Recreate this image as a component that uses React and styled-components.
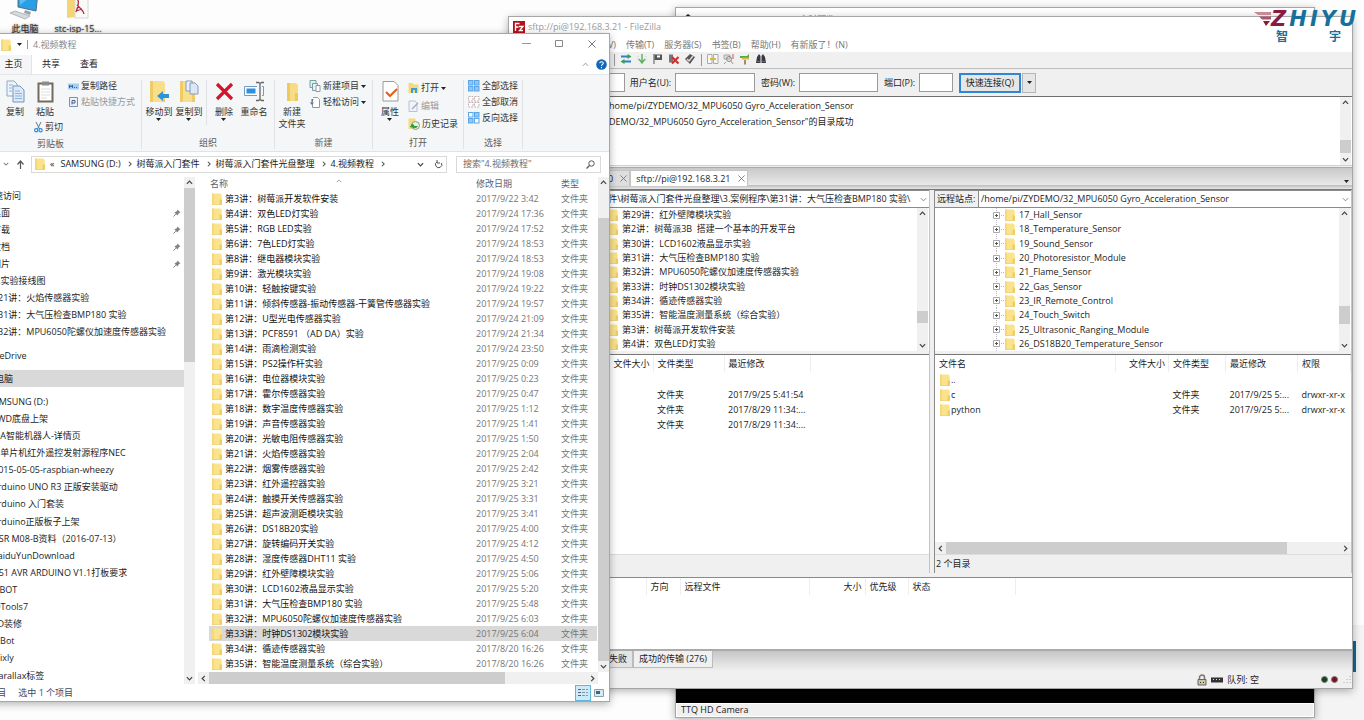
import React from 'react';
import styled, { createGlobalStyle } from 'styled-components';


const GlobalStyle = createGlobalStyle`
    * {
        box-sizing: border-box;
    }

    html, body, #root {
        height: 100%;
        margin: 0;
    }

    body, button, input, select, table {
        font-family: "Open Sans", "Noto Sans CJK SC", sans-serif;
        font-size: 9px;
        line-height: 12px;
        color: #1c1c1c;
    }

    button {
        border: 0;
        padding: 0;
        background: none;
    }

    ul {
        list-style: none;
        margin: 0;
        padding: 0;
    }
`

const Desktop = styled.div`
    position: relative;
    height: 100%;
    min-height: 600px;
    overflow: hidden;
    background: #fdfdfd;
    white-space: nowrap;
`

const DesktopIcon = styled.div`
    position: absolute;
    top: -8px;
    left: ${({ $left }) => $left}px;
    width: 52px;
    display: flex;
    flex-direction: column;
    align-items: center;
    gap: 3px;
    color: #333;
    text-shadow: 0 0 2px #555;
`

const Window = styled.section`
    position: absolute;
    display: flex;
    flex-direction: column;
    border: 1px solid #a6a6a6;
    background: #fff;
    box-shadow: 0 2px 8px rgba(0, 0, 0, .3);
`

/* ---------- camera window ---------- */

const CameraWindow = styled(Window)`
    top: 7px;
    right: 49px;
    bottom: 2px;
    left: 675px;
`

const CameraTitle = styled.div`
    display: flex;
    align-items: center;
    gap: 5px;
    height: 20px;
    padding: 3px 6px 0;
    color: #777;
`

const CameraView = styled.div`
    flex: 1;
    background: #000;
`

const CameraStatus = styled.div`
    height: 14px;
    padding: 0 4px;
    background: #f0f0f0;
    border: 1px solid #fff;
`

const SidePanel = styled.div`
    position: absolute;
    right: 0;
    bottom: 0;
    width: 49px;
    height: 95px;
    padding: 16px 8px 48px 0;
    background: #f4f4f4;
`

const SideAccent = styled.div`
    height: 100%;
    background: #0d6a94;
`

/* ---------- shared pieces ---------- */

const Spacer = styled.div`
    flex: ${({ $size }) => $size ? `0 0 ${$size}px` : '1'};
`

const Bar = styled.div`
    flex: none;
    display: flex;
    flex-direction: ${({ $horizontal }) => $horizontal ? 'row' : 'column'};
    align-items: center;
    ${({ $horizontal }) => $horizontal ? 'height: 12px;' : 'width: 11px;'}
    background: #f0f0f0;
`

const BarTrack = styled.div`
    flex: 1;
    align-self: stretch;
    display: flex;
    flex-direction: ${({ $horizontal }) => $horizontal ? 'row' : 'column'};
`

const BarGap = styled.div`
    flex: ${({ $part }) => $part};
`

const BarThumb = styled.div`
    flex: ${({ $part }) => $part};
    background: #cdcdcd;
`

const BarButton = styled.button`
    width: 11px;
    height: 11px;
    display: flex;
    align-items: center;
    justify-content: center;
`

const Chevron = ({ dir = 'down', size = 7, color = '#444', width = 1.4 }) => {
    const paths = {
        down: 'M1 2.5 4 5.5 7 2.5',
        up: 'M1 5.5 4 2.5 7 5.5',
        left: 'M5.5 1 2.5 4 5.5 7',
        right: 'M2.5 1 5.5 4 2.5 7'
    };
    return (
        <svg width={size} height={size} viewBox="0 0 8 8" fill="none" stroke={color} strokeWidth={width}>
            <path d={paths[dir]} />
        </svg>
    )
}

const Caret = () => (
    <svg width="5" height="3" viewBox="0 0 5 3"><path d="M0 0h5L2.5 3z" fill="#222" /></svg>
)

const ScrollBar = ({ parts, horizontal }) => (
    <Bar $horizontal={horizontal}>
        <BarButton aria-label="back"><Chevron dir={horizontal ? 'left' : 'up'} /></BarButton>
        <BarTrack $horizontal={horizontal}>
            <BarGap $part={parts[0]} />
            <BarThumb $part={parts[1]} />
            <BarGap $part={parts[2]} />
        </BarTrack>
        <BarButton aria-label="forward"><Chevron dir={horizontal ? 'right' : 'down'} /></BarButton>
    </Bar>
)

const Folder = ({ size = 12 }) => (
    <svg width={size} height={size} viewBox="0 0 12 12">
        <path d="M1 .5h8.5l1.2 1.5v9.5H1z" fill="#fbe38c" />
        <path d="M1 .5h2v11H1z" fill="#f6d878" />
        <path d="M8.6 6.5h2.4v5H8.6z" fill="#f1cd5c" />
        <path d="M1 11.5h10" stroke="#e5c25c" strokeWidth=".6" />
    </svg>
)

/* ---------- explorer window ---------- */

const ExplorerWindow = styled(Window)`
    top: 33px;
    bottom: 18px;
    left: -41px;
    width: 651px;
`

const ExplorerTitle = styled.div`
    flex: none;
    display: flex;
    align-items: center;
    gap: 5px;
    height: 21px;
    padding: 0 13px 0 40px;
    color: #8a8a8a;
`

const TitleDivider = styled.div`
    width: 1px;
    height: 9px;
    background: #999;
`

const WindowButtons = styled.div`
    margin-left: auto;
    display: flex;
    gap: 24px;
`

const TabRow = styled.div`
    flex: none;
    display: flex;
    align-items: stretch;
    height: 19px;
    padding-right: 2px;
`

const RibbonTab = styled.button`
    width: ${({ $width }) => $width}px;
    padding-bottom: 1px;
    background: ${({ $active }) => $active ? '#f5f6f7' : 'transparent'};
    padding-left: ${({ $active }) => $active ? 36 : 0}px;
    border-right: 1px solid ${({ $active }) => $active ? '#e3e4e6' : 'transparent'};
`

const TabTools = styled.div`
    margin-left: auto;
    display: flex;
    align-items: center;
    gap: 7px;
`

const Ribbon = styled.div`
    flex: none;
    display: flex;
    height: 78px;
    padding: 5px 0 2px;
    background: #f5f6f7;
    border-top: 1px solid #e4e6e8;
    border-bottom: 1px solid #e2e3e4;
`

const RibbonGroup = styled.div`
    width: ${({ $width }) => $width}px;
    display: flex;
    flex-direction: column;
    border-right: 1px solid #e0e2e4;
`

const GroupBody = styled.div`
    flex: 1;
    display: flex;
    align-items: flex-start;
    padding-left: ${({ $pad = 0 }) => $pad}px;
`

const GroupLabel = styled.div`
    text-align: center;
    color: #5c5c5c;
`

const BigButton = styled.button`
    width: 30px;
    display: flex;
    flex-direction: column;
    align-items: center;
    gap: 3px;
    color: #333;
`

const BigLabel = styled.span`
    display: flex;
    flex-direction: column;
    align-items: center;
    white-space: pre-line;
`

const SmallColumn = styled.div`
    display: flex;
    flex-direction: column;
    gap: ${({ $gap = 4 }) => $gap}px;
    padding-left: ${({ $pad = 0 }) => $pad}px;
    padding-top: ${({ $top = 0 }) => $top}px;
`

const SmallButton = styled.button`
    display: flex;
    align-items: center;
    gap: 2px;
    height: 12px;
    color: ${({ disabled }) => disabled ? '#9a9a9a' : '#333'};
`

const InnerDivider = styled.div`
    align-self: stretch;
    width: 1px;
    margin: 0 2px 12px;
    background: #e0e2e4;
`

const AddressRow = styled.div`
    flex: none;
    display: flex;
    align-items: center;
    height: 24px;
    padding: 0 8px 0 43px;
`

const NavArrows = styled.div`
    display: flex;
    align-items: center;
    gap: 7px;
    width: 28px;
`

const AddressBox = styled.div`
    flex: 424;
    height: 17px;
    display: flex;
    align-items: center;
    gap: 4px;
    padding: 0 3px 0 2px;
    border: 1px solid #d9d9d9;
`

const Crumb = styled.button`
    margin-right: 2px;
`

const SearchBox = styled.label`
    flex: 137;
    height: 17px;
    margin-left: 9px;
    padding: 0 5px 0 6px;
    display: flex;
    align-items: center;
    border: 1px solid #d9d9d9;
`

const SearchInput = styled.input`
    flex: 1;
    min-width: 0;
    border: 0;
    padding: 0;
    background: none;

    &::placeholder {
        color: #6d6d6d;
        opacity: 1;
    }
`

const ExplorerBody = styled.div`
    flex: 1;
    min-height: 0;
    display: flex;
    padding-top: 1px;
`

const NavPane = styled.div`
    flex: 0 0 224px;
    display: flex;
    flex-direction: column;
    padding-top: 10px;
`

const NavItem = styled.button`
    flex: 1;
    min-height: 0;
    display: flex;
    align-items: center;
    justify-content: space-between;
    padding-left: ${({ $left }) => $left}px;
    padding-right: 3px;
    background: ${({ $selected }) => $selected ? '#d9d9d9' : 'transparent'};
`

const FilePane = styled.div`
    flex: 1;
    min-width: 0;
    display: flex;
    flex-direction: column;
    padding-left: 3px;
`

const FileScroll = styled.div`
    flex: 1;
    min-height: 0;
    display: flex;
`

const FileArea = styled.div`
    flex: 1;
    min-width: 0;
    overflow: hidden;
    padding: 0 1px 0 11px;
`

const BottomScroll = styled.div`
    padding-right: 11px;
`

const FileTable = styled.table`
    width: 100%;
    table-layout: fixed;
    border-collapse: collapse;

    th, td {
        height: 15px;
        padding: 0;
        font-weight: 400;
        text-align: left;
    }

    th {
        height: 14px;
        color: #55657a;
    }
`

const FileRow = styled.tr`
    background: ${({ $selected }) => $selected ? '#d9d9d9' : 'transparent'};
`

const FileName = styled.td`
    > div {
        display: flex;
        align-items: center;
        gap: 2px;
        padding-left: 2px;
        color: #111;
    }
`

const Muted = styled.td`
    color: #757575;
`

const NameHead = styled.div`
    display: flex;
    align-items: flex-start;
    gap: 108px;
    padding-left: 1px;
`

const ExplorerStatus = styled.div`
    flex: none;
    height: 17px;
    display: flex;
    align-items: center;
    gap: 12px;
    padding: 0 2px 0 18px;
    color: #3a4a66;
`

const ViewButtons = styled.div`
    margin-left: auto;
    display: flex;
    align-items: center;
`

const ViewButton = styled.button`
    width: 16px;
    height: 16px;
    display: flex;
    align-items: center;
    justify-content: center;
    border: 1px solid ${({ $active }) => $active ? '#5fb8dc' : 'transparent'};
    background: ${({ $active }) => $active ? '#cdeaf6' : 'transparent'};
`

/* ---------- ftp window ---------- */

const FtpWindow = styled(Window)`
    top: 16px;
    right: 11px;
    bottom: 31px;
    left: 508px;
    background: #f0f0f0;
`

const FtpTitle = styled.div`
    flex: none;
    display: flex;
    align-items: center;
    gap: 3px;
    height: 20px;
    padding-left: 4px;
    background: #fff;
    color: #999;
`

const FtpMenu = styled.nav`
    flex: none;
    display: flex;
    align-items: center;
    gap: 10px;
    height: 15px;
    padding-left: 2px;
    background: #fff;

    button {
        color: #777;
    }
`

const Toolbar = styled.div`
    flex: none;
    display: flex;
    align-items: center;
    gap: 4px;
    height: 17px;
    padding-left: 104px;
    border-bottom: 1px solid #bdbdbd;
`

const ToolDivider = styled.div`
    width: 1px;
    height: 12px;
    margin: 0 1px;
    background: #999;
`

const QuickConnect = styled.form`
    flex: none;
    display: flex;
    align-items: center;
    height: 27px;
`

const FieldLabel = styled.label`
    width: ${({ $width }) => $width}px;
    padding-right: 4px;
    text-align: right;
`

const Field = styled.input`
    width: ${({ $width }) => $width}px;
    height: 19px;
    padding: 0 3px;
    border: 1px solid #9a9a9a;
    background: #fff;
`

const ConnectButton = styled.button`
    width: 62px;
    height: 20px;
    margin-left: 6px;
    border: 2px solid #2f86d2;
    background: #e6e6e6;
`

const ConnectMenu = styled.button`
    width: 14px;
    height: 20px;
    margin-left: 1px;
    display: flex;
    align-items: center;
    justify-content: center;
    border: 1px solid #b5b5b5;
    background: #e6e6e6;
`

const LogPanel = styled.div`
    flex: none;
    display: flex;
    height: 70px;
    padding-right: 1px;
    background: #fff;
    border-top: 1px solid #6f6f6f;
    border-bottom: 1px solid #d0d0d0;
`

const LogText = styled.div`
    flex: 1;
    padding-top: 1px;
`

const LogLine = styled.div`
    display: flex;
    height: 16px;
    align-items: center;
`

const LogPrefix = styled.span`
    width: 100px;
    display: flex;
    justify-content: flex-end;
    overflow: hidden;
`

const SiteTabs = styled.div`
    flex: none;
    display: flex;
    align-items: flex-end;
    height: 23px;
    margin-top: 1px;
    padding: 0 3px 3px 4px;
    border-top: 1px solid #aaa;
    border-bottom: 1px solid #777;
    background: linear-gradient(#c9c9cb, #e8e8e8 80%, #bbb 81%, #e8e8e8 100%);
`

const SiteTab = styled.button`
    height: 16px;
    display: flex;
    align-items: center;
    gap: 7px;
    padding: 0 2px 0 5px;
    background: ${({ $active }) => $active ? '#fff' : '#dedede'};
    border: 1px solid #c4c4c4;
    border-bottom: 0;
`

const Panes = styled.div`
    flex: 1;
    min-height: 0;
    display: flex;
    gap: 4px;
`

const Pane = styled.div`
    flex: ${({ $grow }) => $grow};
    min-width: 0;
    display: flex;
    flex-direction: column;
    border-left: 1px solid #8a8a8a;
    border-right: 1px solid #c4c4c4;
`

const PathRow = styled.div`
    flex: none;
    display: flex;
    align-items: center;
    height: 18px;
    border-top: 1px solid #8a8a8a;
    border-bottom: 1px solid #8a8a8a;
    background: #fff;
`

const PathLabel = styled.label`
    width: ${({ $width }) => $width}px;
    height: 16px;
    padding: 2px 0 0 2px;
    overflow: hidden;
    background: #f0f0f0;
    border-right: 1px solid #8a8a8a;
`

const PathBox = styled.div`
    flex: 1;
    min-width: 0;
    display: flex;
    align-items: center;
    padding-right: 2px;
`

const PathSelect = styled.select`
    flex: 1;
    min-width: 0;
    appearance: none;
    border: 0;
    padding: 0 0 0 2px;
    background: transparent;
`

const TreePanel = styled.div`
    flex: none;
    display: flex;
    height: 143px;
    padding-right: 1px;
    background: #fff;
`

const Tree = styled.ul`
    flex: 1;
    display: flex;
    flex-direction: column;
    padding-left: ${({ $left }) => $left}px;
`

const TreeItem = styled.li`
    flex: 1;
    min-height: 0;
    display: flex;
    align-items: center;
    gap: 3px;
    white-space: pre;
`

const ListPanel = styled.div`
    flex: 1;
    min-height: 0;
    margin-top: 3px;
    border-top: 1px solid #777;
    background: #fff;
    overflow: hidden;
`

const ListTable = styled.table`
    width: ${({ $width }) => $width || '100%'};
    table-layout: fixed;
    border-collapse: collapse;

    th, td {
        height: 15px;
        padding: 0 0 0 4px;
        font-weight: 400;
        text-align: left;
        overflow: hidden;
    }

    th {
        height: 17px;
        border-right: 1px solid #eee;
    }

    th.size {
        text-align: right;
        padding: 0 3px 0 0;
    }
`

const ListName = styled.div`
    display: flex;
    align-items: center;
`

const PaneStatus = styled.div`
    flex: none;
    height: 19px;
    padding: 3px 1px;
    border-top: 1px solid #ddd;
`

const QueuePanel = styled.div`
    flex: none;
    height: 74px;
    margin-top: 4px;
    background: #fff;
    border-top: 1px solid #8a8a8a;
    border-bottom: 2px solid #aaa;
`

const QueueTabs = styled.div`
    flex: none;
    display: flex;
    height: 20px;
    align-items: flex-start;
    padding-left: 44px;
    background: linear-gradient(#c6c6c8, #f0f0f0);
`

const QueueTab = styled.button`
    height: 17px;
    width: ${({ $width }) => $width}px;
    padding-right: 5px;
    text-align: right;
    background: ${({ $active }) => $active ? '#f0f0f0' : '#e4e4e4'};
    border: 1px solid #bbb;
    border-top: 0;
`

const FtpStatus = styled.div`
    flex: none;
    display: flex;
    align-items: center;
    justify-content: flex-end;
    height: 17px;
    gap: 4px;
    padding-right: 1px;
`

const Lights = styled.div`
    display: flex;
    gap: 3px;
    margin-left: 58px;
`

const Light = styled.span`
    width: 7px;
    height: 7px;
    border-radius: 50%;
    border: 1px solid #777;
    background: ${({ $color }) => $color};
`

/* ---------- logo ---------- */

const Logo = styled.div`
    position: absolute;
    top: 10px;
    right: 8px;
    color: #17709c;
`

const LogoWord = styled.div`
    display: flex;
    align-items: center;
    gap: 3px;
    font: italic 700 21px/18px "DejaVu Sans", sans-serif;
`

const LogoZ = styled.span`
    display: flex;
    align-items: center;
    color: #8b1a3c;
`

const LogoSub = styled.div`
    display: flex;
    gap: 41px;
    padding-left: 22px;
    font-size: 12px;
    line-height: 18px;
    font-weight: 700;
`


const quickAccess = [
    { title: '快速访问', left: 25 },
    { title: '桌面', left: 32, pin: true },
    { title: '下载', left: 32, pin: true },
    { title: '文档', left: 32, pin: true },
    { title: '图片', left: 32, pin: true },
    { title: '1.实验接线图', left: 33 },
    { title: '第21讲：火焰传感器实验', left: 29 },
    { title: '第31讲：大气压检查BMP180 实验', left: 29 },
    { title: '第32讲：MPU6050陀螺仪加速度传感器实验', left: 29 }
];

const drives = [
    { title: 'SAMSUNG (D:)', left: 28 },
    { title: '4WD底盘上架', left: 32 },
    { title: 'ADA智能机器人-详情页', left: 28 },
    { title: '51单片机红外遥控发射源程序NEC', left: 30 },
    { title: '2015-05-05-raspbian-wheezy', left: 33 },
    { title: 'Arduino UNO R3 正版安装驱动', left: 32 },
    { title: 'Arduino 入门套装', left: 32 },
    { title: 'Arduino正版板子上架', left: 32 },
    { title: 'ASR M08-B资料（2016-07-13）', left: 33 },
    { title: 'BaiduYunDownload', left: 32 },
    { title: 'C51 AVR ARDUINO V1.1打板要求', left: 33 },
    { title: 'DBOT', left: 33 },
    { title: 'DTools7', left: 34 },
    { title: 'KD装修', left: 32 },
    { title: 'MBot', left: 32 },
    { title: 'Mixly', left: 32 },
    { title: 'Parallax标签', left: 33 }
];

const files = [
    ['第3讲：树莓派开发软件安装', '2017/9/22 3:42'],
    ['第4讲：双色LED灯实验', '2017/9/24 17:36'],
    ['第5讲：RGB LED实验', '2017/9/24 17:52'],
    ['第6讲：7色LED灯实验', '2017/9/24 18:53'],
    ['第8讲：继电器模块实验', '2017/9/24 18:53'],
    ['第9讲：激光模块实验', '2017/9/24 19:08'],
    ['第10讲：轻触按键实验', '2017/9/24 19:22'],
    ['第11讲：倾斜传感器-振动传感器-干簧管传感器实验', '2017/9/24 19:57'],
    ['第12讲：U型光电传感器实验', '2017/9/24 21:09'],
    ['第13讲：PCF8591 （AD DA）实验', '2017/9/24 21:34'],
    ['第14讲：雨滴检测实验', '2017/9/24 23:50'],
    ['第15讲：PS2操作杆实验', '2017/9/25 0:09'],
    ['第16讲：电位器模块实验', '2017/9/25 0:23'],
    ['第17讲：霍尔传感器实验', '2017/9/25 0:47'],
    ['第18讲：数字温度传感器实验', '2017/9/25 1:12'],
    ['第19讲：声音传感器实验', '2017/9/25 1:41'],
    ['第20讲：光敏电阻传感器实验', '2017/9/25 1:50'],
    ['第21讲：火焰传感器实验', '2017/9/25 2:04'],
    ['第22讲：烟雾传感器实验', '2017/9/25 2:42'],
    ['第23讲：红外遥控器实验', '2017/9/25 3:21'],
    ['第24讲：触摸开关传感器实验', '2017/9/25 3:31'],
    ['第25讲：超声波测距模块实验', '2017/9/25 3:41'],
    ['第26讲：DS18B20实验', '2017/9/25 4:00'],
    ['第27讲：旋转编码开关实验', '2017/9/25 4:12'],
    ['第28讲：湿度传感器DHT11 实验', '2017/9/25 4:50'],
    ['第29讲：红外壁障模块实验', '2017/9/25 5:06'],
    ['第30讲：LCD1602液晶显示实验', '2017/9/25 5:20'],
    ['第31讲：大气压检查BMP180 实验', '2017/9/25 5:48'],
    ['第32讲：MPU6050陀螺仪加速度传感器实验', '2017/9/25 6:03'],
    ['第33讲：时钟DS1302模块实验', '2017/9/25 6:04'],
    ['第34讲：循迹传感器实验', '2017/8/20 16:26'],
    ['第35讲：智能温度测量系统（综合实验）', '2017/8/20 16:26']
];

const localTree = [
    '第29讲：红外壁障模块实验',
    '第2讲：树莓派3B  搭建一个基本的开发平台',
    '第30讲：LCD1602液晶显示实验',
    '第31讲：大气压检查BMP180 实验',
    '第32讲：MPU6050陀螺仪加速度传感器实验',
    '第33讲：时钟DS1302模块实验',
    '第34讲：循迹传感器实验',
    '第35讲：智能温度测量系统（综合实验）',
    '第3讲：树莓派开发软件安装',
    '第4讲：双色LED灯实验'
];

const remoteTree = [
    '17_Hall_Sensor',
    '18_Temperature_Sensor',
    '19_Sound_Sensor',
    '20_Photoresistor_Module',
    '21_Flame_Sensor',
    '22_Gas_Sensor',
    '23_IR_Remote_Control',
    '24_Touch_Switch',
    '25_Ultrasonic_Ranging_Module',
    '26_DS18B20_Temperature_Sensor'
];


/* ---------- icons ---------- */

const Icon = ({ w = 12, h = w, box = `0 0 ${w} ${h}`, children }) => (
    <svg width={w} height={h} viewBox={box} fill="none">{children}</svg>
)

const MonitorIcon = () => (
    <Icon w={30} h={28}>
        <path d="M8 0h20l-2 19L8 15z" fill="#2b9fe6" stroke="#4a6f8c" />
        <path d="M9 0h18L10 13z" fill="#5cbcf2" />
        <path d="M15 18l6 2-1 3-6-2z" fill="#9aa4ab" />
        <path d="M0 21l5-2 15 5-5 3z" fill="#d5dadd" stroke="#9aa0a4" strokeWidth=".7" />
    </Icon>
)

const IspIcon = () => (
    <Icon w={24} h={28}>
        <path d="M1 2l8 1v22l-8 1z" fill="#f6d473" />
        <path d="M9 4h13v22H9z" fill="#fafafa" stroke="#d8d8d8" />
        <path d="M10 7c4 0 2 8 0 13M11 13l4 4c2 2 3 4 3 5M10 19l6-2" stroke="#b22a3a" strokeWidth="1.3" />
    </Icon>
)

const PagesIcon = () => (
    <Icon w={19} h={23}>
        <path d="M1 1h7l3 3v12H1z" fill="#eef5fc" stroke="#8fa9c4" />
        <path d="M7 6h7l4 4v12H7z" fill="#dce9f8" stroke="#7895b4" />
        <path d="M9 11h5M9 13.500h7M9 16h7M9 18.500h7M3 5h4M3 8h3M3 11h3" stroke="#8fb3dc" />
    </Icon>
)

const ClipboardIcon = () => (
    <Icon w={17} h={23}>
        <path d="M1.500 3.500h14v18h-14z" fill="#fff" stroke="#76695e" strokeWidth="2" />
        <path d="M5 1.500h7v4H5z" fill="#8c8c8c" />
        <path d="M4 9h9M4 12h9M4 15h9M4 18h6" stroke="#ddd" />
    </Icon>
)

const PinBigIcon = () => (
    <Icon w={18} h={23}><path d="M10 3l6 6-5 2-3 5-6-6 5-3zM5 14l-4 5" fill="#8fa9c4" stroke="#6c87a3" /></Icon>
)

const MoveIcon = ({ copy }) => (
    <Icon w={20} h={23}>
        <path d="M1 1h13l2 2v19H1z" fill="#f9df8c" />
        <path d="M1 1h3v21H1zM13 14h3v8h-3z" fill="#efcb66" />
        {copy
            ? <><path d="M7 1h6v10H7z" fill="#e8f0fa" stroke="#869cc0" /><path d="M11 3h5l3 3v8h-8z" fill="#dbe6f7" stroke="#869cc0" /></>
            : <path d="M8 16l6-5v3h6v4h-6v3z" fill="#2e93dd" />}
    </Icon>
)

const DeleteIcon = () => (
    <Icon w={19} h={23}>
        <path d="M2 4l15 15M17 4L2 19" stroke="#d4142a" strokeWidth="3.200" />
    </Icon>
)

const RenameIcon = () => (
    <Icon w={20} h={23}>
        <path d="M13 6.500H.5v9H13" fill="#fff" stroke="#6f9cc4" />
        <path d="M2.500 8.500h9v5h-9z" fill="#2e8fdd" />
        <path d="M12 2.500h2.500l1.500 1 1.500-1H20M16 3.500v16M12 20.500h2.500l1.500-1 1.500 1H20" stroke="#666" strokeWidth="1.300" />
        <path d="M18 6.500h1.500v9H18" stroke="#6f9cc4" />
    </Icon>
)

const NewFolderIcon = () => (
    <Icon w={16} h={23}>
        <path d="M3 3h9l2 2v16H3z" fill="#f7dc83" />
        <path d="M3 3h3v18H3zM11 13h3v8h-3z" fill="#edc95f" />
    </Icon>
)

const PropertiesIcon = () => (
    <Icon w={17} h={23}>
        <path d="M1 1.500h11l4 4V21H1z" fill="#fff" stroke="#9a9a9a" />
        <path d="M4 12l4 4 7-7" stroke="#e0641e" strokeWidth="2.200" />
    </Icon>
)

const PathIcon = () => (
    <Icon w={11} h={12}>
        <path d="M0 3.500h11v6H0z" fill="#a9cdef" />
        <path d="M1.500 8V5l1.500 2 1.500-2v3M6 7.500h1M8 7.500h1" stroke="#2a6cab" />
    </Icon>
)

const ShortcutIcon = () => (
    <Icon w={11} h={12}>
        <path d="M1.500 1.500h8v9h-8z" fill="#eef1f8" stroke="#7c8fb4" />
        <path d="M4 8.500V4.500h3v2.500H4" stroke="#4a5f92" />
    </Icon>
)

const CutIcon = () => (
    <Icon w={9} h={12}>
        <path d="M2 1l3.500 7M7 1L3.500 8" stroke="#5e7a92" />
        <circle cx="2.200" cy="9.300" r="1.600" stroke="#2e8fdd" strokeWidth="1.200" />
        <circle cx="6.600" cy="9.300" r="1.600" stroke="#2e8fdd" strokeWidth="1.200" />
    </Icon>
)

const NewItemIcon = () => (
    <Icon w={12}>
        <path d="M1 .5h6v7H1z" fill="#dff0ee" stroke="#75a39f" />
        <path d="M3.500 3.500h5v7h-5z" fill="#e8f2f6" stroke="#7f9aa6" />
        <path d="M7 5.500h4v6H7z" fill="#fff" stroke="#8a9aa6" />
    </Icon>
)

const EasyAccessIcon = () => (
    <Icon w={12}>
        <path d="M4 1.500h4.500l2 2v8H3.500V8" fill="#fff" stroke="#8a9aa6" />
        <path d="M4.500 3H2.500v3.500H.8L3 9l2-2.500H3.500" fill="#5c7690" />
    </Icon>
)

const OpenIcon = () => (
    <Icon w={11} h={12}>
        <path d="M.5 1h4l1 1.500h5V11H.5z" fill="#f6da7a" />
        <path d="M3 11V6h6v5H7V8H5v3z" fill="#3b9fdc" />
    </Icon>
)

const EditIcon = () => (
    <Icon w={11} h={12}>
        <path d="M1 1h6l2 2v8.500H1z" fill="#f1f3f9" stroke="#b9c1d4" />
        <path d="M4 9l6-6" stroke="#9eabca" strokeWidth="1.500" />
    </Icon>
)

const HistoryIcon = () => (
    <Icon w={12}>
        <path d="M.5.5h7V11h-7z" fill="#f6da7a" />
        <circle cx="7.500" cy="7.500" r="4" fill="#e7f3e2" stroke="#8a9a88" />
        <path d="M9.500 8A3 3 0 014 8M2.500 9L4.500 6l2 2.500z" stroke="#2f9a38" fill="#2f9a38" />
    </Icon>
)

const SelectIcon = ({ kind }) => {
    const boxes = [[0.5, 0.5], [6.5, 0.5], [0.5, 6.5], [6.5, 6.5]];
    const filled = { all: [0, 1, 2, 3], none: [], invert: [1, 2] }[kind];
    const dim = kind === 'none';
    return (
        <Icon w={12}>
            {boxes.map(([x, y], i) => (
                <rect
                    key={i}
                    x={x}
                    y={y}
                    width="4.500"
                    height="4.500"
                    fill={filled.includes(i) ? '#8ec6f5' : '#fff'}
                    stroke={dim ? '#c3b3b3' : '#5aa5e6'}
                    strokeDasharray={dim ? '2 1' : undefined}
                />
            ))}
        </Icon>
    )
}

const PinIcon = () => (
    <Icon w={8}>
        <path d="M4.500.5l3 3-1.500.5L4.500 6.500l-3-3L4 2z" fill="#7d8288" />
        <path d="M2.800 5.200L.5 7.500" stroke="#7d8288" />
    </Icon>
)

const HelpIcon = () => (
    <Icon w={11}>
        <circle cx="5.500" cy="5.500" r="5.300" fill="#1266b8" />
        <path d="M3.800 4.200c0-2 3.500-2 3.500 0C7.300 5.500 5.500 5.300 5.500 7M5.500 8v1.200" stroke="#fff" strokeWidth="1.100" />
    </Icon>
)

const CloseIcon = ({ size = 8, color = '#777' }) => (
    <Icon w={size} box="0 0 8 8"><path d="M.5.5l7 7M7.500.5l-7 7" stroke={color} /></Icon>
)

const FzIcon = () => (
    <Icon w={12}>
        <path d="M0 0h12v12H0z" fill="#b5121b" />
        <path d="M2.500 10V2.500h4M2.500 6h3M6 5.500h4L6.500 9.500H10" stroke="#fff" strokeWidth="1.300" />
    </Icon>
)

const PlusBox = () => (
    <Icon w={12} h={15}>
        <path d="M4.500 0v15M7 7.500h5" stroke="#b9b9c6" strokeDasharray="1 1" />
        <path d="M1.500 4.500h6v6h-6z" fill="#fff" stroke="#a9a9b0" />
        <path d="M3 7.500h3M4.500 6v3" stroke="#555" />
    </Icon>
)

const CameraIcon = () => (
    <Icon w={11}><path d="M1 5l5-4 4 3-4 4zM2 6l2 4M8 6v4" stroke="#222" strokeWidth="1.500" /></Icon>
)

const toolIcons = [
    <><path d="M1 3.500h7M4 8.500h7" stroke="#2f7fd0" strokeWidth="2" /><path d="M7.500 1l4 2.500-4 2.500zM4.500 6l-4 2.500 4 2.500z" fill="#33a24a" /></>,
    <><path d="M6 1v8M3 6l3 4 3-4" stroke="#63b35f" strokeWidth="1.500" /><path d="M2 3v6M10 3v6" stroke="#ccc" strokeDasharray="1 1" /></>,
    <><path d="M2 1v10" stroke="#555" /><path d="M2.500 1.500H10v5.500H2.500z" fill="#555" /><path d="M5 2.500h3v2H5z" fill="#fff" /></>,
    <><path d="M1 1.500h4v8H1z" fill="#777" /><path d="M4 4l6.500 6.500M10.500 4L4 10.500" stroke="#d42a2a" strokeWidth="2" /></>,
    <><path d="M1 6l5-5 5 3-5 7z" fill="#555" /><path d="M3 6l2 2 4-5" stroke="#ddd" strokeWidth="1.500" /></>,
    <><path d="M.5 1.500h4.500v9H.5zM6.500 1.500H11v9H6.500z" fill="#f7f7f7" stroke="#aaa" /><path d="M3 6h6" stroke="#d9b93c" strokeWidth="2" /></>,
    <><path d="M1 2h6v4H1z" fill="#ddd" stroke="#aaa" /><circle cx="6" cy="6" r="2.500" stroke="#888" /><path d="M8 8l2 3M3 9l-2 2" stroke="#999" /><path d="M10 1v5" stroke="#c55" /></>,
    <><path d="M1 3h7l2-2v5L8 5H1z" fill="#58a84b" /><path d="M3 5.500h7" stroke="#e0b53a" strokeWidth="2" /><path d="M6 7v4.500" stroke="#8b6b3a" strokeWidth="1.500" /></>,
    <><path d="M1 10l1-6 2-3 1.500 2v7zM11 10l-1-6-2-3-1.500 2v7z" fill="#3a3a42" /><path d="M1 8.500h4M7 8.500h4" stroke="#b5483a" /></>
];


const ExplorerRibbon = () => (
    <Ribbon>
        <RibbonGroup $width={182}>
            <GroupBody $pad={4}>
                <BigButton><PinBigIcon /><BigLabel>固定</BigLabel></BigButton>
                <Spacer $size={6} />
                <BigButton><PagesIcon /><BigLabel>复制</BigLabel></BigButton>
                <SmallColumn $gap={2}>
                    <BigButton><ClipboardIcon /><BigLabel>粘贴</BigLabel></BigButton>
                    <Spacer $size={1} />
                </SmallColumn>
                <SmallColumn $pad={8}>
                    <SmallButton><PathIcon />复制路径</SmallButton>
                    <SmallButton disabled><ShortcutIcon />粘贴快捷方式</SmallButton>
                </SmallColumn>
            </GroupBody>
            <SmallColumn $pad={74}>
                <SmallButton><CutIcon />剪切</SmallButton>
            </SmallColumn>
            <Spacer $size={5} />
            <GroupLabel>剪贴板</GroupLabel>
        </RibbonGroup>
        <RibbonGroup $width={133}>
            <GroupBody $pad={2}>
                <BigButton><MoveIcon /><BigLabel>移动到<Caret /></BigLabel></BigButton>
                <BigButton><MoveIcon copy /><BigLabel>复制到<Caret /></BigLabel></BigButton>
                <InnerDivider />
                <BigButton><DeleteIcon /><BigLabel>删除<Caret /></BigLabel></BigButton>
                <BigButton><RenameIcon /><BigLabel>重命名</BigLabel></BigButton>
            </GroupBody>
            <GroupLabel>组织</GroupLabel>
        </RibbonGroup>
        <RibbonGroup $width={98}>
            <GroupBody $pad={2}>
                <BigButton><NewFolderIcon /><BigLabel>{'新建\n文件夹'}</BigLabel></BigButton>
                <SmallColumn $pad={2}>
                    <SmallButton><NewItemIcon />新建项目<Caret /></SmallButton>
                    <SmallButton><EasyAccessIcon />轻松访问<Caret /></SmallButton>
                </SmallColumn>
            </GroupBody>
            <GroupLabel>新建</GroupLabel>
        </RibbonGroup>
        <RibbonGroup $width={91}>
            <GroupBody $pad={2}>
                <BigButton><PropertiesIcon /><BigLabel>属性<Caret /></BigLabel></BigButton>
                <SmallColumn $pad={3} $top={2} $gap={6}>
                    <SmallButton><OpenIcon />打开<Caret /></SmallButton>
                    <SmallButton disabled><EditIcon />编辑</SmallButton>
                    <SmallButton><HistoryIcon />历史记录</SmallButton>
                </SmallColumn>
            </GroupBody>
            <GroupLabel>打开</GroupLabel>
        </RibbonGroup>
        <RibbonGroup $width={59}>
            <GroupBody $pad={4}>
                <SmallColumn>
                    <SmallButton><SelectIcon kind="all" />全部选择</SmallButton>
                    <SmallButton><SelectIcon kind="none" />全部取消</SmallButton>
                    <SmallButton><SelectIcon kind="invert" />反向选择</SmallButton>
                </SmallColumn>
            </GroupBody>
            <GroupLabel>选择</GroupLabel>
        </RibbonGroup>
    </Ribbon>
)

const NavList = ({ items }) => items.map(({ title, left, pin, selected }) => (
    <NavItem key={title} $left={left} $selected={selected}>
        {title}
        {pin && <PinIcon />}
    </NavItem>
))

const Explorer = () => {
    return (
        <ExplorerWindow>
            <ExplorerTitle>
                <Folder />
                <Caret />
                <TitleDivider />
                4.视频教程
                <WindowButtons>
                    <button aria-label="最小化"><Icon w={9}><path d="M0 4.500h9" stroke="#999" /></Icon></button>
                    <button aria-label="最大化"><Icon w={9}><path d="M.5 1.500h7v6h-7z" stroke="#888" /></Icon></button>
                    <button aria-label="关闭"><CloseIcon /></button>
                </WindowButtons>
            </ExplorerTitle>
            <TabRow>
                <RibbonTab $active $width={72}>主页</RibbonTab>
                <RibbonTab $width={39}>共享</RibbonTab>
                <RibbonTab $width={37}>查看</RibbonTab>
                <TabTools>
                    <Chevron dir="up" color="#888" width={1} />
                    <HelpIcon />
                </TabTools>
            </TabRow>
            <ExplorerRibbon />
            <AddressRow>
                <NavArrows>
                    <Chevron size={6} color="#888" />
                    <Icon w={9}><path d="M4.500 9V1M1.500 4.500l3-3.500 3 3.500" stroke="#555" strokeWidth="1.200" /></Icon>
                </NavArrows>
                <AddressBox>
                    <Folder />
                    <Crumb>«</Crumb>
                    <Crumb>SAMSUNG (D:)</Crumb>
                    <Chevron dir="right" size={6} />
                    <Crumb>树莓派入门套件</Crumb>
                    <Chevron dir="right" size={6} />
                    <Crumb>树莓派入门套件光盘整理</Crumb>
                    <Chevron dir="right" size={6} />
                    <Crumb>4.视频教程</Crumb>
                    <Chevron dir="right" size={6} />
                    <Spacer />
                    <Chevron />
                    <Spacer $size={2} />
                    <Icon w={9}><path d="M7.500 3A3.200 3.200 0 11 3 1.800M3 0v3h3" stroke="#555" /></Icon>
                </AddressBox>
                <SearchBox>
                    <SearchInput aria-label="搜索" placeholder={'搜索"4.视频教程"'} />
                    <Icon w={9}><circle cx="5.500" cy="3.500" r="2.700" stroke="#555" /><path d="M3.500 5.500L.5 8.500" stroke="#555" strokeWidth="1.300" /></Icon>
                </SearchBox>
            </AddressRow>
            <ExplorerBody>
                <NavPane>
                    <NavList items={quickAccess} />
                    <Spacer $size={6} />
                    <NavList items={[{ title: 'OneDrive', left: 27 }]} />
                    <Spacer $size={6} />
                    <NavList items={[{ title: '此电脑', left: 26, selected: true }]} />
                    <Spacer $size={6} />
                    <NavList items={drives} />
                </NavPane>
                <ScrollBar parts={[0, 174, 310]} />
                <FilePane>
                    <FileScroll>
                        <FileArea>
                            <FileTable>
                                <colgroup>
                                    <col />
                                    <col width="85" />
                                    <col width="36" />
                                </colgroup>
                                <thead>
                                    <tr>
                                        <th><NameHead>名称<Chevron dir="up" size={6} color="#888" width={1} /></NameHead></th>
                                        <th>修改日期</th>
                                        <th>类型</th>
                                    </tr>
                                </thead>
                                <tbody>
                                    {
                                        files.map(([title, date]) => (
                                            <FileRow key={title} $selected={title.startsWith('第33讲')}>
                                                <FileName><div><Folder />{title}</div></FileName>
                                                <Muted>{date}</Muted>
                                                <Muted>文件夹</Muted>
                                            </FileRow>
                                        ))
                                    }
                                </tbody>
                            </FileTable>
                        </FileArea>
                        <ScrollBar parts={[30, 440, 0]} />
                    </FileScroll>
                    <BottomScroll>
                        <ScrollBar horizontal parts={[0, 295, 82]} />
                    </BottomScroll>
                </FilePane>
            </ExplorerBody>
            <ExplorerStatus>
                <span>34项目</span>
                <span>选中 1 个项目</span>
                <ViewButtons>
                    <ViewButton $active aria-label="详细信息">
                        <Icon w={12}><path d="M1 2.500h3M1 5.500h3M1 8.500h3" stroke="#4a6a86" /><path d="M5 2.500h3M5 5.500h3M5 8.500h3M9 2.500h2M9 5.500h2M9 8.500h2" stroke="#7d99ad" /></Icon>
                    </ViewButton>
                    <ViewButton aria-label="大图标">
                        <Icon w={10} h={8}><path d="M.5.5h9v7h-9z" fill="#dce8ef" stroke="#8aa0ae" /><path d="M2 2h4v3H2z" fill="#3a6a82" /></Icon>
                    </ViewButton>
                </ViewButtons>
            </ExplorerStatus>
        </ExplorerWindow>
    )
}

const LocalPane = () => (
    <Pane $grow={421}>
        <PathRow>
            <PathLabel htmlFor="local" $width={30}>本地:</PathLabel>
            <PathBox>
                <PathSelect id="local">
                    <option>{'D:\\树莓派入门套件\\树莓派入门套件光盘整理\\3.案例程序\\第31讲：大气压检查BMP180 实验\\'}</option>
                </PathSelect>
                <Chevron color="#777" width={1} />
            </PathBox>
        </PathRow>
        <TreePanel>
            <Tree $left={97}>
                {localTree.map(title => <TreeItem key={title}><Folder />{title}</TreeItem>)}
            </Tree>
            <ScrollBar parts={[88, 12, 16]} />
        </TreePanel>
        <ListPanel>
            <ListTable $width="301px">
                <colgroup>
                    <col width="92" />
                    <col width="51" />
                    <col width="71" />
                    <col />
                </colgroup>
                <thead>
                    <tr>
                        <th>文件名</th>
                        <th className="size">文件大小</th>
                        <th>文件类型</th>
                        <th>最近修改</th>
                    </tr>
                </thead>
                <tbody>
                    <tr><td><ListName><Folder />..</ListName></td><td /><td /><td /></tr>
                    <tr><td><ListName><Folder />c</ListName></td><td /><td>文件夹</td><td>2017/9/25 5:41:54</td></tr>
                    <tr><td><ListName><Folder />python</ListName></td><td /><td>文件夹</td><td>2017/8/29 11:34:...</td></tr>
                    <tr><td><ListName><Folder />pic</ListName></td><td /><td>文件夹</td><td>2017/8/29 11:34:...</td></tr>
                </tbody>
            </ListTable>
        </ListPanel>
        <PaneStatus>3 个目录</PaneStatus>
    </Pane>
)

const RemotePane = () => (
    <Pane $grow={418}>
        <PathRow>
            <PathLabel htmlFor="remote" $width={44}>远程站点:</PathLabel>
            <PathBox>
                <PathSelect id="remote">
                    <option>/home/pi/ZYDEMO/32_MPU6050 Gyro_Acceleration_Sensor</option>
                </PathSelect>
                <Chevron color="#777" width={1} />
            </PathBox>
        </PathRow>
        <TreePanel>
            <Tree $left={57}>
                {
                    remoteTree.map(title => (
                        <TreeItem key={title}>
                            <ListName><PlusBox /><Folder /></ListName>
                            {title}
                        </TreeItem>
                    ))
                }
            </Tree>
            <ScrollBar parts={[83, 18, 15]} />
        </TreePanel>
        <ListPanel>
            <ListTable>
                <colgroup>
                    <col />
                    <col width="53" />
                    <col width="57" />
                    <col width="72" />
                    <col width="53" />
                </colgroup>
                <thead>
                    <tr>
                        <th>文件名</th>
                        <th className="size">文件大小</th>
                        <th>文件类型</th>
                        <th>最近修改</th>
                        <th>权限</th>
                    </tr>
                </thead>
                <tbody>
                    <tr><td><ListName><Folder />..</ListName></td><td /><td /><td /><td /></tr>
                    {
                        ['c', 'python'].map(title => (
                            <tr key={title}>
                                <td><ListName><Folder />{title}</ListName></td>
                                <td />
                                <td>文件夹</td>
                                <td>2017/9/25 5:...</td>
                                <td>drwxr-xr-x</td>
                            </tr>
                        ))
                    }
                </tbody>
            </ListTable>
        </ListPanel>
        <ScrollBar horizontal parts={[0, 341, 53]} />
        <PaneStatus>2 个目录</PaneStatus>
    </Pane>
)

const Ftp = () => {
    return (
        <FtpWindow>
            <FtpTitle><FzIcon />sftp://pi@192.168.3.21 - FileZilla</FtpTitle>
            <FtpMenu>
                <button>文件(F)</button>
                <button>编辑(E)</button>
                <button>查看(V)</button>
                <button>传输(T)</button>
                <button>服务器(S)</button>
                <button>书签(B)</button>
                <button>帮助(H)</button>
                <button>有新版了！(N)</button>
            </FtpMenu>
            <Toolbar>
                <ToolDivider />
                {
                    toolIcons.map((icon, i) => (
                        <React.Fragment key={i}>
                            {i === 5 && <ToolDivider />}
                            <button aria-label={`tool ${i + 1}`}><Icon w={12}>{icon}</Icon></button>
                        </React.Fragment>
                    ))
                }
            </Toolbar>
            <QuickConnect>
                <FieldLabel htmlFor="host" $width={46}>主机(H):</FieldLabel>
                <Field id="host" $width={70} />
                <FieldLabel htmlFor="user" $width={50}>用户名(U):</FieldLabel>
                <Field id="user" $width={80} />
                <FieldLabel htmlFor="pass" $width={44}>密码(W):</FieldLabel>
                <Field id="pass" type="password" $width={79} />
                <FieldLabel htmlFor="port" $width={41}>端口(P):</FieldLabel>
                <Field id="port" $width={34} />
                <ConnectButton type="button">快速连接(Q)</ConnectButton>
                <ConnectMenu type="button" aria-label="历史"><Caret /></ConnectMenu>
            </QuickConnect>
            <LogPanel>
                <LogText>
                    <LogLine><LogPrefix>状态: 列出目录 /</LogPrefix>home/pi/ZYDEMO/32_MPU6050 Gyro_Acceleration_Sensor</LogLine>
                    <LogLine><LogPrefix>状态: "/home/pi/ZY</LogPrefix>DEMO/32_MPU6050 Gyro_Acceleration_Sensor"的目录成功</LogLine>
                </LogText>
                <ScrollBar parts={[31, 12, 1]} />
            </LogPanel>
            <SiteTabs>
                <SiteTab>sftp://pi@192.168.3.20<CloseIcon size={7} /></SiteTab>
                <SiteTab $active>sftp://pi@192.168.3.21<CloseIcon size={7} /></SiteTab>
                <Spacer />
                <button aria-label="标签列表"><Caret /></button>
            </SiteTabs>
            <Panes>
                <LocalPane />
                <RemotePane />
            </Panes>
            <QueuePanel>
                <ListTable $width="507px">
                    <colgroup>
                        <col width="137" />
                        <col width="34" />
                        <col width="129" />
                        <col width="56" />
                        <col width="43" />
                        <col />
                    </colgroup>
                    <thead>
                        <tr>
                            <th>服务器/本地文件</th>
                            <th>方向</th>
                            <th>远程文件</th>
                            <th className="size">大小</th>
                            <th>优先级</th>
                            <th>状态</th>
                        </tr>
                    </thead>
                </ListTable>
            </QueuePanel>
            <QueueTabs>
                <QueueTab $width={80}>传输失败</QueueTab>
                <QueueTab $active $width={80}>成功的传输 (276)</QueueTab>
            </QueueTabs>
            <FtpStatus>
                <Icon w={10} h={12}>
                    <path d="M2.500 6V3.500a2.500 2.500 0 015 0V6" stroke="#777" strokeWidth="1.500" />
                    <path d="M1 5.500h8V11H1z" fill="#c9c6a0" stroke="#666" />
                    <path d="M3 8.500h1M6 8.500h1" stroke="#333" />
                </Icon>
                <Icon w={12} h={6}><path d="M0 .5h12v5H0z" fill="#333" /><path d="M2 2.500h1M5 2.500h1M8 2.500h1" stroke="#ddd" /></Icon>
                队列: 空
                <Lights><Light $color="#16401f" /><Light $color="#7a0f22" /></Lights>
                <Icon w={9}><path d="M8 1v1M8 4v1M8 7v1M5 4v1M5 7v1M2 7v1" stroke="#aaa" /></Icon>
            </FtpStatus>
        </FtpWindow>
    )
}

const Camera = () => (
    <CameraWindow>
        <CameraTitle><CameraIcon />AMCap - CIF Single Chip 实时预览 Preview 275</CameraTitle>
        <CameraView />
        <CameraStatus>TTQ HD Camera</CameraStatus>
    </CameraWindow>
)

const Brand = () => (
    <Logo>
        <LogoWord>
            <LogoZ>
                <Icon w={17} h={14}>
                    <path d="M0 0h17v3H4z" fill="#c98a98" />
                    <path d="M5 4.500h12v3H8z" fill="#b0546c" />
                    <path d="M9 9h7l-4 5z" fill="#8b1a3c" />
                </Icon>
                Z
            </LogoZ>
            <span>H</span>
            <span>I</span>
            <span>Y</span>
            <span>U</span>
        </LogoWord>
        <LogoSub>
            <span>智</span>
            <span>宇</span>
        </LogoSub>
    </Logo>
)

const App = () => {
    return (
        <>
            <GlobalStyle />
            <Desktop>
                <DesktopIcon $left={-1}><MonitorIcon />此电脑</DesktopIcon>
                <DesktopIcon $left={52}><IspIcon />stc-isp-15...</DesktopIcon>
                <SidePanel><SideAccent /></SidePanel>
                <Camera />
                <Ftp />
                <Explorer />
                <Brand />
            </Desktop>
        </>
    );
};

export default App;
